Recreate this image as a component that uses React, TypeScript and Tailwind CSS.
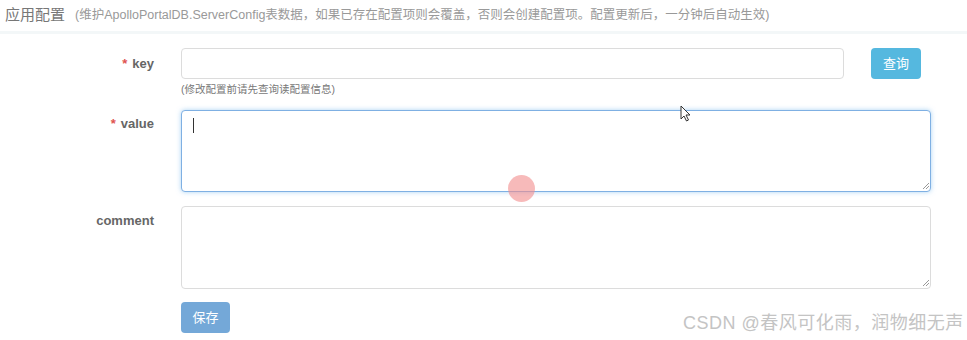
import React from "react";

const cjk = { fontFamily: '"Liberation Sans", "Noto Sans CJK SC", sans-serif' };

function Label({ text, required, top = "pt-[6px]" }: { text: string; required?: boolean; top?: string }) {
  return (
    <div className={`w-[156px] shrink-0 pr-[2px] text-right text-[13px] font-bold text-[#666] ${top}`}>
      {required && <span className="mr-[5px] text-[#e0534f]">*</span>}
      {text}
    </div>
  );
}

export default function App() {
  return (
    <div className="relative h-[340px] w-[967px] overflow-hidden bg-white" style={cjk}>
      {/* header */}
      <div className="flex h-[34px] items-center border-b-[3px] border-[#f3f7f8] pl-[5px]">
        <span className="text-[15px] text-[#777]">应用配置</span>
        <span className="ml-[10px] text-[12.5px] text-[#999]">
          (维护ApolloPortalDB.ServerConfig表数据，如果已存在配置项则会覆盖，否则会创建配置项。配置更新后，一分钟后自动生效)
        </span>
      </div>

      {/* form */}
      <div className="flex flex-col pt-[14px]">
        <div className="flex">
          <Label text="key" required />
          <div className="ml-[25px] flex flex-col">
            <div className="flex items-center">
              <div className="h-[31px] w-[663px] rounded-[4px] border border-[#dcdcdc] bg-white" />
              <button className="ml-[27px] h-[31px] w-[50px] rounded-[4px] bg-[#55b8df] text-[13px] text-white">
                查询
              </button>
            </div>
            <div className="mt-[3px] text-[10.5px] text-[#777]">(修改配置前请先查询读配置信息)</div>
          </div>
        </div>

        <div className="mt-[12px] flex">
          <Label text="value" required top="pt-[4px]" />
          <div className="ml-[25px] h-[82px] w-[750px] rounded-[4px] border border-[#7fb0e3] bg-white px-[11px] pt-[7px] shadow-[0_0_5px_rgba(102,175,233,0.55)]">
            <div className="h-[15px] w-px bg-[#333]" />
          </div>
        </div>

        <div className="mt-[14px] flex">
          <Label text="comment" top="pt-[5px]" />
          <div className="ml-[25px] h-[83px] w-[750px] rounded-[4px] border border-[#dcdcdc] bg-white" />
        </div>

        <div className="mt-[13px] pl-[181px]">
          <button className="h-[31px] w-[49px] rounded-[4px] bg-[#74a8d8] text-[13px] text-white">保存</button>
        </div>
      </div>

      {/* resize grips */}
      <svg className="absolute left-[922px] top-[182px]" width="8" height="8" viewBox="0 0 8 8">
        <path d="M1 7 L7 1 M4 7 L7 4" stroke="#999" strokeWidth="1" />
      </svg>
      <svg className="absolute left-[922px] top-[279px]" width="8" height="8" viewBox="0 0 8 8">
        <path d="M1 7 L7 1 M4 7 L7 4" stroke="#999" strokeWidth="1" />
      </svg>

      {/* mouse cursor */}
      <svg className="absolute left-[680px] top-[105px]" width="12" height="18" viewBox="0 0 12 18">
        <path d="M1 1 L1 14 L4 11 L6.5 16 L8.5 15 L6 10 L10 10 Z" fill="white" stroke="#333" strokeWidth="1" />
      </svg>

      {/* click highlight */}
      <div className="absolute left-[508px] top-[175px] h-[27px] w-[27px] rounded-full bg-[rgba(242,140,140,0.6)]" />

      {/* watermark */}
      <div className="absolute left-[683px] top-[310px] text-[18px] tracking-[0.5px] text-[#c4c4c4]">
        CSDN @春风可化雨，润物细无声
      </div>
    </div>
  );
}
